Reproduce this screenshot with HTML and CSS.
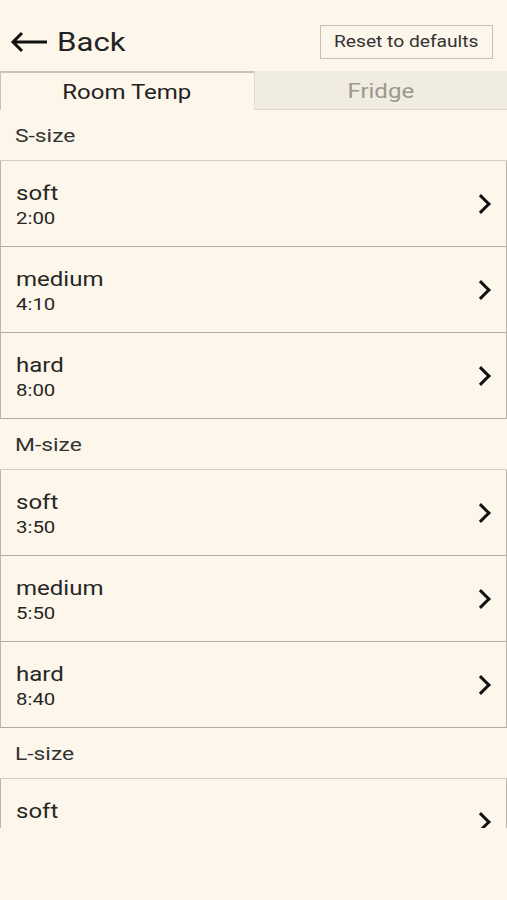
FILE: index.html
```html
<!DOCTYPE html>
<html lang="en">
<head>
    <meta charset="UTF-8">
    <meta name="viewport" content="width=device-width, initial-scale=1.0">
    <title>Boiled Egg Timer - Settings</title>
    <link rel="stylesheet" href="styles.css">
</head>
<body>
    <div class="topbar">
        <a class="back" href="#">
            <svg width="40" height="24" viewBox="0 0 40 24"><path d="M38 12H4M13 3L4 12l9 9" fill="none" stroke="#111" stroke-width="3"/></svg>
            <span class="wide">Back</span>
        </a>
        <button class="reset"><span class="wide mid">Reset to defaults</span></button>
    </div>

    <div class="tabs">
        <div class="tab active"><span class="wide mid">Room Temp</span></div>
        <div class="tab"><span class="wide mid">Fridge</span></div>
    </div>

    <div class="content">
        <div class="section-title"><span class="wide">S-size</span></div>
        <div class="list">
            <div class="row"><div><div class="name wide">soft</div><div class="time wide">2:00</div></div><span class="chev"></span></div>
            <div class="row"><div><div class="name wide">medium</div><div class="time wide">4:10</div></div><span class="chev"></span></div>
            <div class="row"><div><div class="name wide">hard</div><div class="time wide">8:00</div></div><span class="chev"></span></div>
        </div>

        <div class="section-title"><span class="wide">M-size</span></div>
        <div class="list">
            <div class="row"><div><div class="name wide">soft</div><div class="time wide">3:50</div></div><span class="chev"></span></div>
            <div class="row"><div><div class="name wide">medium</div><div class="time wide">5:50</div></div><span class="chev"></span></div>
            <div class="row"><div><div class="name wide">hard</div><div class="time wide">8:40</div></div><span class="chev"></span></div>
        </div>

        <div class="section-title"><span class="wide">L-size</span></div>
        <div class="list">
            <div class="row"><div><div class="name wide">soft</div><div class="time wide">4:10</div></div><span class="chev"></span></div>
        </div>
    </div>
</body>
</html>
```

FILE: styles.css
```css
body {
    background: #fdf6ea;
    color: #262626;
    font-family: Roboto, 'Liberation Sans', sans-serif;
    margin: 0;
}
/* the app's text is drawn a little wide */
.wide {
    display: inline-block;
    transform: scaleX(1.2);
    transform-origin: left center;
}
.wide.mid {
    transform-origin: center;
}
.topbar {
    height: 71px;
    display: flex;
    align-items: center;
    justify-content: space-between;
    padding: 0 14px 0 9px;
}
.back {
    display: flex;
    align-items: center;
    gap: 8px;
    color: #222;
    text-decoration: none;
    font-size: 26px;
    margin-top: 12px;
}
.reset {
    width: 173px;
    height: 34px;
    margin-top: 12px;
    padding: 0;
    background: transparent;
    border: 1px solid #c4c0b6;
    color: #333;
    font-family: Roboto, 'Liberation Sans', sans-serif;
    font-size: 16px;
}
.tabs {
    display: flex;
    height: 39px;
}
.tab {
    flex: 1;
    display: flex;
    align-items: center;
    justify-content: center;
    font-size: 20px;
    color: #9b978f;
    background: #f1ece0;
    border-bottom: 1px solid #dcd7cb;
    padding-top: 2px;
}
.tab.active {
    color: #222;
    background: #fdf6ea;
    border-top: 2px solid #c8c4b8;
    border-left: 1px solid #c8c4b8;
    border-right: 1px solid #e2ddd2;
    border-bottom: none;
    padding-top: 0;
}
.content {
    height: 718px;
    overflow: hidden;
}
.section-title {
    height: 50px;
    display: flex;
    align-items: center;
    padding-left: 15px;
    font-size: 19px;
    color: #333;
}
.list {
    border-top: 1px solid #d2cec3;
}
.row {
    height: 85px;
    display: flex;
    align-items: center;
    justify-content: space-between;
    padding: 2px 14px 0 15px;
    box-sizing: border-box;
    height: 86px;
    border-left: 1px solid #b9b5ac;
    border-right: 1px solid #b9b5ac;
    border-bottom: 1px solid #b0aca3;
}
.name {
    display: block;
    font-size: 20px;
    line-height: 24px;
}
.time {
    display: block;
    font-size: 17px;
    line-height: 22px;
    margin-top: 2px;
}
.chev {
    width: 11px;
    height: 11px;
    border-top: 3px solid #111;
    border-right: 3px solid #111;
    transform: rotate(45deg);
    margin: 0 4px 2px 0;
}
```
